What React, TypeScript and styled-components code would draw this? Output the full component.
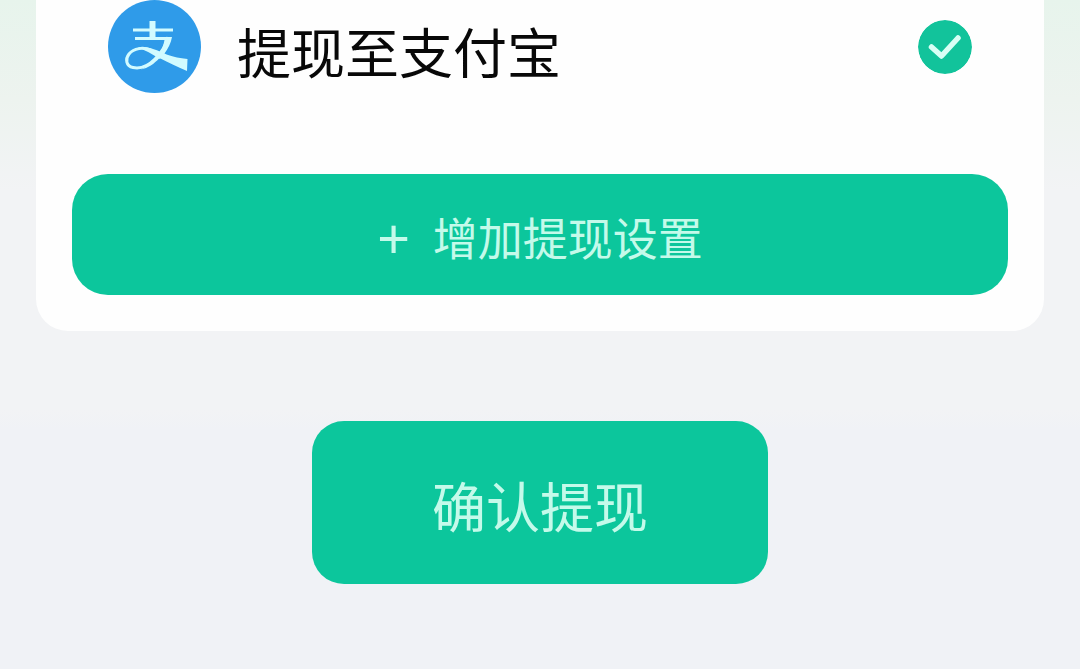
import React, { useState } from "react";
import styled, { createGlobalStyle } from "styled-components";

const GlobalStyle = createGlobalStyle`
  *, *::before, *::after { box-sizing: border-box; }
  body {
    margin: 0;
    background: #f0f2f6;
    font-family: "Noto Sans CJK SC", "Noto Sans", sans-serif;
  }
`;

const Page = styled.main`
  display: flex;
  flex-direction: column;
  align-items: center;
  gap: 90px;
  min-height: 100vh;
  padding: 0 36px 84px;
  background: linear-gradient(
    180deg,
    #e7f4ec 0px,
    #edf3ef 100px,
    #f2f3f5 190px,
    #f2f3f5 410px,
    #f0f2f6 430px
  );
`;

const Card = styled.section`
  display: flex;
  flex-direction: column;
  gap: 81px;
  width: 100%;
  padding: 0 36px 36px;
  border-radius: 0 0 32px 32px;
  background: #fefefe;
`;

const MethodRow = styled.label`
  display: flex;
  align-items: center;
  gap: 36px;
  padding: 0 36px;
  cursor: pointer;
`;

const AlipayLogo = styled.svg`
  flex: none;
  width: 93px;
  height: 93px;
`;

const MethodName = styled.span`
  flex: 1;
  padding-top: 8px;
  font-size: 54px;
  font-weight: 400;
  line-height: 80px;
  color: #080808;
`;

const RadioBox = styled.span`
  position: relative;
  display: flex;
  flex: none;
`;

const Radio = styled.input`
  position: absolute;
  inset: 0;
  width: 100%;
  height: 100%;
  margin: 0;
  opacity: 0;
  cursor: pointer;
`;

const CheckMark = styled.svg`
  width: 54px;
  height: 54px;
  border-radius: 50%;

  ${Radio}:focus-visible + & {
    outline: 3px solid #8fe3cf;
  }
`;

const Button = styled.button<{ $large?: boolean }>`
  display: flex;
  align-items: center;
  justify-content: center;
  gap: 23px;
  height: ${(p) => (p.$large ? 163 : 121)}px;
  padding: 0 ${(p) => (p.$large ? 120 : 24)}px;
  border: 0;
  border-radius: ${(p) => (p.$large ? 32 : 36)}px;
  background: #0cc69c;
  color: #c4faea;
  font-family: inherit;
  font-size: ${(p) => (p.$large ? 54 : 45)}px;
  font-weight: 400;
  line-height: ${(p) => (p.$large ? 80 : 64)}px;
  cursor: pointer;
`;

const ButtonText = styled.span`
  padding-top: 4px;
`;

const Plus = styled.span`
  padding-top: 8px;
  font-family: "Liberation Sans", sans-serif;
  font-size: 56px;
`;

export default function App() {
  const [method, setMethod] = useState("alipay");

  return (
    <>
      <GlobalStyle />
      <Page>
        <Card>
          <MethodRow>
            <AlipayLogo viewBox="0 0 93 93" aria-hidden="true">
              <circle cx="46.5" cy="46.5" r="46.5" fill="#2f9be9" />
              <g fill="none" stroke="#d2fbff">
                <path d="M25 30H65" strokeWidth="3" />
                <path d="M27 38.5H62" strokeWidth="3" />
                <path d="M44.500 21V38.500" strokeWidth="6" />
                <path
                  d="M60 37C58 45 54 52 47 59C40 66 32 69 25 67.500C18 66 17 59 21 54C26 48 35 47 43 50"
                  strokeWidth="3"
                />
              </g>
              <path
                d="M57 37H64C63 43 60 49 56.500 53.500C62 56 69 58 79.500 59L79 71C69 67 60 62 51.500 58C46 64 40 68 33 69.500C42 65 48 59 52 53C55 48 56 43 57 37Z"
                fill="#d2fbff"
              />
              <path d="M30 47.500C38 46 46 49 55 53L52 59C44 54 37 50 30 47.500Z" fill="#d2fbff" />
            </AlipayLogo>
            <MethodName>提现至支付宝</MethodName>
            <RadioBox>
              <Radio
                type="radio"
                name="method"
                value="alipay"
                checked={method === "alipay"}
                onChange={(e) => setMethod(e.target.value)}
              />
              <CheckMark viewBox="0 0 54 54" aria-hidden="true">
                <circle cx="27" cy="27" r="27" fill="#12c39b" />
                <path
                  d="M13.500 27L23.500 36L40 18"
                  fill="none"
                  stroke="#d8fff5"
                  strokeWidth="5.5"
                  strokeLinecap="round"
                  strokeLinejoin="round"
                />
              </CheckMark>
            </RadioBox>
          </MethodRow>
          <Button type="button">
            <Plus aria-hidden="true">+</Plus>
            <ButtonText>增加提现设置</ButtonText>
          </Button>
        </Card>
        <Button type="button" $large>
          <ButtonText>确认提现</ButtonText>
        </Button>
      </Page>
    </>
  );
}
